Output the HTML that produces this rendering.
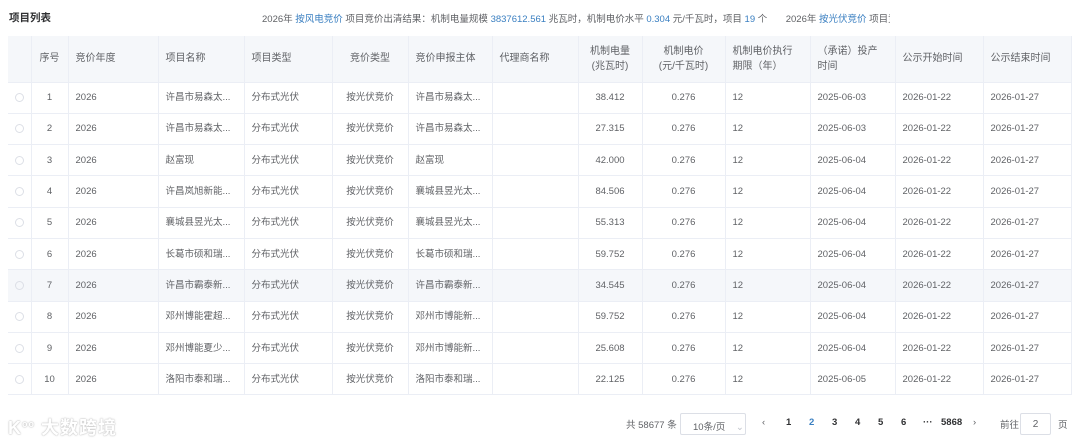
<!DOCTYPE html>
<html><head><meta charset="utf-8"><style>
*{margin:0;padding:0;box-sizing:border-box}
body{width:1080px;height:447px;background:#fff;font-family:"Liberation Sans","Noto Sans CJK SC",sans-serif;color:#606266;position:relative;overflow:hidden;font-size:10px}
.title{position:absolute;left:9px;top:10px;font-size:10.5px;font-weight:bold;color:#303133}
.info{position:absolute;left:262px;top:11px;font-size:9.5px;color:#606266;white-space:nowrap;width:628px;overflow:hidden}
.info b{font-weight:normal;color:#3a7fc1}
table{position:absolute;left:8px;top:36px;border-collapse:collapse;table-layout:fixed;width:1063px}
td,th{border-right:1px solid #ebeef5;border-bottom:1px solid #ebeef5;padding:0 7px;font-size:9.5px;white-space:nowrap;overflow:hidden;font-weight:normal;text-align:left;vertical-align:middle;line-height:14px}
th{background:#f5f7fa;height:46px;color:#606266;font-size:10px;line-height:15px}
td{height:31.3px;padding-top:1px}
tr.hv td{background:#f5f7fa}
.c{text-align:center}
.rad{display:inline-block;width:9px;height:9px;border:1px solid #dcdfe6;border-radius:50%;vertical-align:middle}
.pg{position:absolute;top:417px;font-size:9.5px;color:#606266}
.pn{font-weight:bold;color:#303133}
.sel{position:absolute;left:680px;top:413px;width:66px;height:22px;border:1px solid #dcdfe6;border-radius:2px;font-size:9.5px;padding:5px 0 0 12px}
.inp{position:absolute;left:1020px;top:413px;width:31px;height:22px;border:1px solid #dcdfe6;border-radius:2px;font-size:10px;text-align:center;padding-top:5px}
.wm{position:absolute;left:8px;top:414px;font-size:18px;color:#fff;font-weight:bold;text-shadow:0 0 1px #c8c8c8,0 0 1px #c8c8c8,0 0 2px #ccc;letter-spacing:1px}
</style></head><body>
<div class="title">项目列表</div>
<div class="info">2026年 <b>按风电竞价</b> 项目竞价出清结果：机制电量规模 <b>3837612.561</b> 兆瓦时，机制电价水平 <b>0.304</b> 元/千瓦时，项目 <b>19</b> 个 &nbsp; &nbsp; &nbsp; 2026年 <b>按光伏竞价</b> 项目竞</div>
<table>
<colgroup><col style="width:23px"><col style="width:37px"><col style="width:90px"><col style="width:86px"><col style="width:88px"><col style="width:76px"><col style="width:84px"><col style="width:86px"><col style="width:64px"><col style="width:83px"><col style="width:85px"><col style="width:85px"><col style="width:88px"><col style="width:88px"></colgroup>
<tr><th></th><th class="c">序号</th><th>竞价年度</th><th>项目名称</th><th>项目类型</th><th class="c">竞价类型</th><th>竞价申报主体</th><th>代理商名称</th><th class="c">机制电量<br>(兆瓦时)</th><th class="c">机制电价<br>(元/千瓦时)</th><th>机制电价执行<br>期限（年）</th><th>（承诺）投产<br>时间</th><th>公示开始时间</th><th>公示结束时间</th></tr>
<tr><td><span class="rad"></span></td><td class="c">1</td><td>2026</td><td>许昌市易森太...</td><td>分布式光伏</td><td class="c">按光伏竞价</td><td>许昌市易森太...</td><td></td><td class="c">38.412</td><td class="c">0.276</td><td>12</td><td>2025-06-03</td><td>2026-01-22</td><td>2026-01-27</td></tr>
<tr><td><span class="rad"></span></td><td class="c">2</td><td>2026</td><td>许昌市易森太...</td><td>分布式光伏</td><td class="c">按光伏竞价</td><td>许昌市易森太...</td><td></td><td class="c">27.315</td><td class="c">0.276</td><td>12</td><td>2025-06-03</td><td>2026-01-22</td><td>2026-01-27</td></tr>
<tr><td><span class="rad"></span></td><td class="c">3</td><td>2026</td><td>赵富现</td><td>分布式光伏</td><td class="c">按光伏竞价</td><td>赵富现</td><td></td><td class="c">42.000</td><td class="c">0.276</td><td>12</td><td>2025-06-04</td><td>2026-01-22</td><td>2026-01-27</td></tr>
<tr><td><span class="rad"></span></td><td class="c">4</td><td>2026</td><td>许昌岚旭新能...</td><td>分布式光伏</td><td class="c">按光伏竞价</td><td>襄城县昱光太...</td><td></td><td class="c">84.506</td><td class="c">0.276</td><td>12</td><td>2025-06-04</td><td>2026-01-22</td><td>2026-01-27</td></tr>
<tr><td><span class="rad"></span></td><td class="c">5</td><td>2026</td><td>襄城县昱光太...</td><td>分布式光伏</td><td class="c">按光伏竞价</td><td>襄城县昱光太...</td><td></td><td class="c">55.313</td><td class="c">0.276</td><td>12</td><td>2025-06-04</td><td>2026-01-22</td><td>2026-01-27</td></tr>
<tr><td><span class="rad"></span></td><td class="c">6</td><td>2026</td><td>长葛市硕和瑞...</td><td>分布式光伏</td><td class="c">按光伏竞价</td><td>长葛市硕和瑞...</td><td></td><td class="c">59.752</td><td class="c">0.276</td><td>12</td><td>2025-06-04</td><td>2026-01-22</td><td>2026-01-27</td></tr>
<tr class="hv"><td><span class="rad"></span></td><td class="c">7</td><td>2026</td><td>许昌市霸泰新...</td><td>分布式光伏</td><td class="c">按光伏竞价</td><td>许昌市霸泰新...</td><td></td><td class="c">34.545</td><td class="c">0.276</td><td>12</td><td>2025-06-04</td><td>2026-01-22</td><td>2026-01-27</td></tr>
<tr><td><span class="rad"></span></td><td class="c">8</td><td>2026</td><td>邓州博能霍超...</td><td>分布式光伏</td><td class="c">按光伏竞价</td><td>邓州市博能新...</td><td></td><td class="c">59.752</td><td class="c">0.276</td><td>12</td><td>2025-06-04</td><td>2026-01-22</td><td>2026-01-27</td></tr>
<tr><td><span class="rad"></span></td><td class="c">9</td><td>2026</td><td>邓州博能夏少...</td><td>分布式光伏</td><td class="c">按光伏竞价</td><td>邓州市博能新...</td><td></td><td class="c">25.608</td><td class="c">0.276</td><td>12</td><td>2025-06-04</td><td>2026-01-22</td><td>2026-01-27</td></tr>
<tr><td><span class="rad"></span></td><td class="c">10</td><td>2026</td><td>洛阳市泰和瑞...</td><td>分布式光伏</td><td class="c">按光伏竞价</td><td>洛阳市泰和瑞...</td><td></td><td class="c">22.125</td><td class="c">0.276</td><td>12</td><td>2025-06-05</td><td>2026-01-22</td><td>2026-01-27</td></tr>
</table>
<div class="wm">K<sup style="font-size:9px">oo</sup> 大数跨境</div>
<div class="pg" style="left:626px">共 58677 条</div>
<div class="sel">10条/页 <span style="color:#c0c4cc;margin-left:8px">⌄</span></div>
<div class="pg" style="left:762px">‹</div>
<div class="pg pn" style="left:786px">1</div>
<div class="pg pn" style="left:809px;color:#3a7fc1">2</div>
<div class="pg pn" style="left:832px">3</div>
<div class="pg pn" style="left:855px">4</div>
<div class="pg pn" style="left:878px">5</div>
<div class="pg pn" style="left:901px">6</div>
<div class="pg pn" style="left:923px">···</div>
<div class="pg pn" style="left:941px">5868</div>
<div class="pg" style="left:973px">›</div>
<div class="pg" style="left:1000px">前往</div>
<div class="inp">2</div>
<div class="pg" style="left:1058px">页</div>
</body></html>
